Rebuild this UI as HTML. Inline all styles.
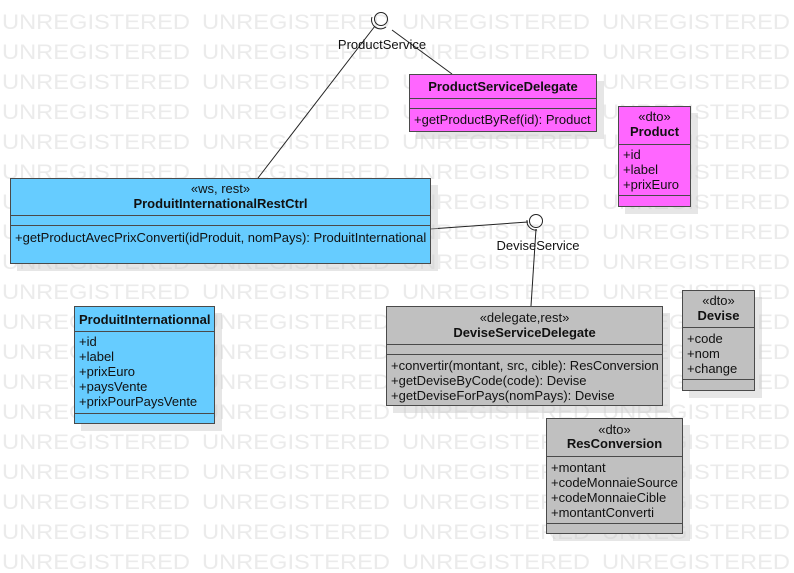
<!DOCTYPE html>
<html><head><meta charset="utf-8"><style>
body{margin:0;width:794px;height:573px;overflow:hidden;background:#fff;font-family:"Liberation Sans",sans-serif;position:relative}
svg{position:absolute;left:0;top:0}
.b{position:absolute;border:1.5px solid #4a4a4a;box-sizing:border-box;box-shadow:7px 7px 0 rgba(200,200,200,.45);font-size:13px;color:#111;line-height:15px}
.b .d{position:absolute;left:0;right:0;border-top:1.5px solid #4a4a4a}
.t{position:absolute;left:0;right:0;text-align:center;white-space:nowrap}
.n{font-weight:bold}
.a{position:absolute;left:5px;white-space:nowrap}
.bl{background:#66ccff}.pk{background:#ff66ff}.gr{background:#c0c0c0}
</style></head><body>
<svg width="794" height="573">
<g id="wm" font-family="Liberation Sans, sans-serif" font-size="21" fill="#ebebeb"></g>
</svg>
<script>
var s='';for(var r=0;r<19;r++){for(var c=0;c<4;c++){s+='<text x="'+(2+200*c)+'" y="'+(29+30*r)+'" textLength="188" lengthAdjust="spacingAndGlyphs">UNREGISTERED</text>';}}
document.getElementById('wm').innerHTML=s;
</script>
<svg width="794" height="573">
<g stroke="#222" stroke-width="1" fill="none">
<line x1="375" y1="26" x2="258" y2="178"/>
<line x1="392" y1="30" x2="452" y2="74"/>
<circle cx="381" cy="19" r="6.5"/>
<path d="M372 17 A9 9 0 0 0 386 27"/>
<line x1="430" y1="229" x2="528" y2="222"/>
<line x1="536" y1="229" x2="531" y2="306"/>
<circle cx="536" cy="221" r="6.5"/>
<path d="M527 220 A9 9 0 0 0 537 230"/>
</g>
<text x="382" y="49" font-family="Liberation Sans, sans-serif" font-size="13" text-anchor="middle" fill="#111">ProductService</text>
<text x="538" y="250" font-family="Liberation Sans, sans-serif" font-size="13" text-anchor="middle" fill="#111">DeviseService</text>
</svg>

<div class="b pk" style="left:409px;top:74px;width:188px;height:58px">
<div class="t n" style="top:4px">ProductServiceDelegate</div>
<div class="d" style="top:23px"></div><div class="d" style="top:33px"></div>
<div class="a" style="top:37px;left:4px">+getProductByRef(id): Product</div>
</div>

<div class="b pk" style="left:618px;top:106px;width:73px;height:101px">
<div class="t" style="top:2px">«dto»</div>
<div class="t n" style="top:17px">Product</div>
<div class="d" style="top:37px"></div>
<div class="a" style="top:40px;left:4px">+id<br>+label<br>+prixEuro</div>
<div class="d" style="top:88px"></div>
</div>

<div class="b bl" style="left:10px;top:178px;width:421px;height:86px">
<div class="t" style="top:2px">«ws, rest»</div>
<div class="t n" style="top:17px">ProduitInternationalRestCtrl</div>
<div class="d" style="top:36px"></div><div class="d" style="top:46px"></div>
<div class="a" style="top:51px;left:4px">+getProductAvecPrixConverti(idProduit, nomPays): ProduitInternational</div>
</div>

<div class="b bl" style="left:74px;top:306px;width:141px;height:118px">
<div class="t n" style="top:5px;text-align:left;left:4px">ProduitInternationnal</div>
<div class="d" style="top:24px"></div>
<div class="a" style="top:27px;left:4px">+id<br>+label<br>+prixEuro<br>+paysVente<br>+prixPourPaysVente</div>
<div class="d" style="top:106px"></div>
</div>

<div class="b gr" style="left:386px;top:306px;width:277px;height:100px">
<div class="t" style="top:3px">«delegate,rest»</div>
<div class="t n" style="top:18px">DeviseServiceDelegate</div>
<div class="d" style="top:37px"></div><div class="d" style="top:47px"></div>
<div class="a" style="top:51px;left:4px">+convertir(montant, src, cible): ResConversion<br>+getDeviseByCode(code): Devise<br>+getDeviseForPays(nomPays): Devise</div>
</div>

<div class="b gr" style="left:682px;top:290px;width:73px;height:101px">
<div class="t" style="top:2px">«dto»</div>
<div class="t n" style="top:17px">Devise</div>
<div class="d" style="top:36px"></div>
<div class="a" style="top:40px;left:4px">+code<br>+nom<br>+change</div>
<div class="d" style="top:88px"></div>
</div>

<div class="b gr" style="left:546px;top:418px;width:137px;height:116px">
<div class="t" style="top:3px">«dto»</div>
<div class="t n" style="top:17px">ResConversion</div>
<div class="d" style="top:37px"></div>
<div class="a" style="top:41px;left:4px">+montant<br>+codeMonnaieSource<br>+codeMonnaieCible<br>+montantConverti</div>
<div class="d" style="top:104px"></div>
</div>
</body></html>
